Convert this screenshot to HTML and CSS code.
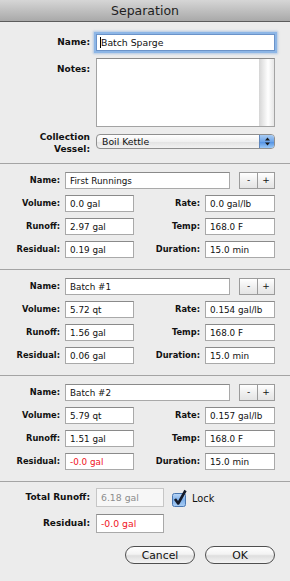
FILE: index.html
```html
<!DOCTYPE html>
<html lang="en">
<head>
    <meta charset="UTF-8">
    <title>Separation</title>
    <link rel="stylesheet" href="styles.css">
</head>
<body>
    <div class="dialog">
        <div class="titlebar">Separation</div>

        <div class="main">
            <label class="lbl">Name:</label>
            <div class="field focused"><span class="caret"></span>Batch Sparge</div>

            <label class="lbl notes-lbl">Notes:</label>
            <div class="notes"><div class="scroll"></div></div>

            <label class="lbl two-line">Collection<br>Vessel:</label>
            <div class="popup">
                <span>Boil Kettle</span>
                <span class="arrows">
                    <svg width="7" height="9" viewBox="0 0 7 9"><path d="M3.5 0.5 L6 3.5 L1 3.5 Z M3.5 8.5 L6 5.5 L1 5.5 Z" fill="#1b1b1b"/></svg>
                </span>
            </div>
        </div>

        <div class="step">
            <label class="lbl">Name:</label>
            <div class="name-row">
                <div class="field name">First Runnings</div>
                <div class="seg"><span>-</span><span>+</span></div>
            </div>
            <label class="lbl">Volume:</label>
            <div class="field">0.0 gal</div>
            <label class="lbl">Rate:</label>
            <div class="field">0.0 gal/lb</div>
            <label class="lbl">Runoff:</label>
            <div class="field">2.97 gal</div>
            <label class="lbl">Temp:</label>
            <div class="field">168.0 F</div>
            <label class="lbl">Residual:</label>
            <div class="field">0.19 gal</div>
            <label class="lbl">Duration:</label>
            <div class="field">15.0 min</div>
        </div>

        <div class="step">
            <label class="lbl">Name:</label>
            <div class="name-row">
                <div class="field name">Batch #1</div>
                <div class="seg"><span>-</span><span>+</span></div>
            </div>
            <label class="lbl">Volume:</label>
            <div class="field">5.72 qt</div>
            <label class="lbl">Rate:</label>
            <div class="field">0.154 gal/lb</div>
            <label class="lbl">Runoff:</label>
            <div class="field">1.56 gal</div>
            <label class="lbl">Temp:</label>
            <div class="field">168.0 F</div>
            <label class="lbl">Residual:</label>
            <div class="field">0.06 gal</div>
            <label class="lbl">Duration:</label>
            <div class="field">15.0 min</div>
        </div>

        <div class="step">
            <label class="lbl">Name:</label>
            <div class="name-row">
                <div class="field name">Batch #2</div>
                <div class="seg"><span>-</span><span>+</span></div>
            </div>
            <label class="lbl">Volume:</label>
            <div class="field">5.79 qt</div>
            <label class="lbl">Rate:</label>
            <div class="field">0.157 gal/lb</div>
            <label class="lbl">Runoff:</label>
            <div class="field">1.51 gal</div>
            <label class="lbl">Temp:</label>
            <div class="field">168.0 F</div>
            <label class="lbl">Residual:</label>
            <div class="field neg">-0.0 gal</div>
            <label class="lbl">Duration:</label>
            <div class="field">15.0 min</div>
        </div>

        <div class="totals">
            <label class="lbl">Total Runoff:</label>
            <div class="field disabled">6.18 gal</div>
            <div class="lock">
                <svg width="16" height="18" viewBox="0 0 16 18">
                    <defs>
                        <linearGradient id="cb" x1="0" y1="0" x2="0" y2="1">
                            <stop offset="0" stop-color="#bcd8f7"/>
                            <stop offset="0.5" stop-color="#7fb0ea"/>
                            <stop offset="1" stop-color="#a9cdf4"/>
                        </linearGradient>
                    </defs>
                    <rect x="0.5" y="4.5" width="13" height="13" rx="2" fill="url(#cb)" stroke="#4a77b0"/>
                    <path d="M3 10 L6.2 14.5 L13.5 1.5" fill="none" stroke="#141a28" stroke-width="2.6" stroke-linejoin="round"/>
                </svg>
                <span>Lock</span>
            </div>

            <label class="lbl">Residual:</label>
            <div class="field neg">-0.0 gal</div>
        </div>

        <div class="actions">
            <button class="pill">Cancel</button>
            <button class="pill">OK</button>
        </div>
    </div>
</body>
</html>
```

FILE: styles.css
```css
* {
    margin: 0;
    padding: 0;
    box-sizing: border-box;
}

body {
    background: #ececec;
    font-family: 'DejaVu Sans', 'Liberation Sans', sans-serif;
    color: #111;
}

.dialog {
    width: 290px;
    min-height: 581px;
    background: #ececec;
}

.titlebar {
    height: 22px;
    line-height: 21px;
    text-align: center;
    font-size: 12.5px;
    color: #1e1e1e;
    background: linear-gradient(#d6d6d6, #a9a9a9);
    border-bottom: 1px solid #5c5c5c;
}

/* labels */
.lbl {
    display: block;
    text-align: right;
    font-weight: bold;
    font-size: 9px;
    line-height: 17px;
    white-space: nowrap;
}

.field {
    height: 17px;
    line-height: 16px;
    padding-left: 4px;
    background: #fff;
    border: 1px solid #a9a9a9;
    border-top-color: #8a8a8a;
    font-size: 8.8px;
    white-space: nowrap;
    overflow: hidden;
}

.field.neg {
    color: #f0141e;
}

.field.disabled {
    color: #8d8d8d;
    border-color: #c6c6c6;
    background: #f7f7f7;
}

/* top block */
.main {
    display: grid;
    grid-template-columns: 90px 179px;
    column-gap: 6px;
    row-gap: 7px;
    padding: 12px 0 8px;
}

.main .field {
    font-size: 9.3px;
    padding-left: 3px;
}

.field.focused {
    border-color: #6b93c9;
    box-shadow: 0 0 0 2px #8db6e6, 0 0 2px 3px rgba(120, 165, 220, 0.5);
    overflow: visible;
}

.caret {
    display: inline-block;
    width: 1px;
    height: 11px;
    background: #000;
    vertical-align: -2px;
}

.notes-lbl {
    padding-top: 3px;
}

.notes {
    height: 69px;
    background: #fff;
    border: 1px solid #a3a3a3;
    border-top-color: #8a8a8a;
    display: flex;
    justify-content: flex-end;
}

.scroll {
    width: 15px;
    background: linear-gradient(90deg, #d5d5d5, #f4f4f4 45%, #ffffff 60%, #e6e6e6);
}

.two-line {
    line-height: 12px;
    margin-top: -3px;
}

.popup {
    height: 15px;
    display: flex;
    align-items: center;
    justify-content: space-between;
    padding-left: 5px;
    font-size: 9.3px;
    border: 1px solid #8f8f8f;
    border-radius: 4px;
    background: linear-gradient(#ffffff, #f1f1f1 50%, #e2e2e2 51%, #f2f2f2);
    overflow: hidden;
}

.arrows {
    width: 15px;
    height: 100%;
    display: flex;
    align-items: center;
    justify-content: center;
    border-left: 1px solid #5f86bb;
    background: linear-gradient(#a9ccf3, #6ea5e9 50%, #4e8ee2 51%, #9cc9f6);
}

/* steps */
.step {
    display: grid;
    grid-template-columns: 60px 69px 61px 70px;
    grid-auto-rows: 17px;
    column-gap: 5px;
    row-gap: 6px;
    padding: 8px 0 11px;
    border-top: 1px solid #a4a4a4;
}

.step .lbl {
    font-size: 8.3px;
}

.name-row {
    grid-column: 2 / 5;
    display: flex;
    justify-content: space-between;
}

.field.name {
    width: 165px;
}

.seg {
    display: flex;
    height: 17px;
    border: 1px solid #9b9b9b;
    background: linear-gradient(#ffffff, #f0f0f0 50%, #e4e4e4);
}

.seg span {
    width: 17px;
    text-align: center;
    font-size: 9px;
    line-height: 15px;
}

.seg span + span {
    border-left: 1px solid #9b9b9b;
}

/* totals */
.totals {
    display: grid;
    grid-template-columns: 90px 68px auto;
    grid-auto-rows: 19px;
    column-gap: 6px;
    row-gap: 7px;
    padding-top: 6px;
    border-top: 1px solid #a4a4a4;
}

.totals .lbl {
    line-height: 19px;
}

.totals .field {
    height: 19px;
    line-height: 18px;
    font-size: 9.3px;
}

.lock {
    display: flex;
    align-items: flex-end;
    gap: 4px;
    margin-left: 2px;
    font-size: 9.8px;
}

.lock svg {
    margin-top: -3px;
}

.lock span {
    line-height: 16px;
}

/* buttons */
.actions {
    display: flex;
    justify-content: flex-end;
    gap: 10px;
    padding: 13px 15px 0 0;
}

.pill {
    width: 70px;
    height: 18px;
    border: 1px solid #4f4f4f;
    border-radius: 9px;
    background: linear-gradient(#ffffff, #f3f3f3 45%, #dedede 55%, #f4f4f4);
    font-family: 'DejaVu Sans', 'Liberation Sans', sans-serif;
    font-size: 10.8px;
    color: #111;
}
```
